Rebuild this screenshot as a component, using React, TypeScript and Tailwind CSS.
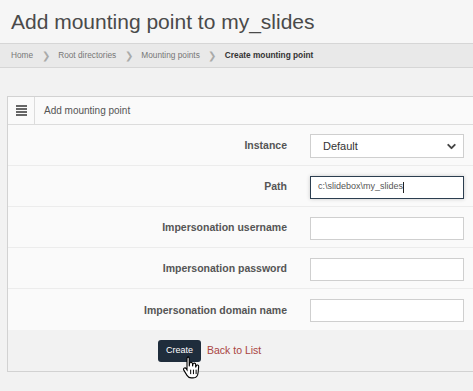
import { ChevronDown } from 'lucide-react'

const rows = [
    { label: 'Instance', kind: 'select' },
    { label: 'Path', kind: 'path' },
    { label: 'Impersonation username', kind: 'text' },
    { label: 'Impersonation password', kind: 'text' },
    { label: 'Impersonation domain name', kind: 'text' },
]

function Crumb({ children, last }: { children: string; last?: boolean }) {
    return (
        <>
            <span className={last ? 'font-bold text-[#333]' : 'text-[#777]'}>{children}</span>
            {!last && <span className="mx-[8.5px] text-[#aaa] text-[10px]">❯</span>}
        </>
    )
}

function HandCursor() {
    return (
        <svg width="20" height="26" viewBox="0 0 18 23" className="absolute left-[174px] top-[25px]">
            <path
                d="M5 1.5c.9 0 1.5.7 1.5 1.6V10l.3-2.4c.1-.8.7-1.3 1.5-1.2.8.1 1.2.7 1.2 1.5V10l.3-1.8c.1-.8.7-1.2 1.4-1.1.8.1 1.2.7 1.1 1.5V11l.4-1.3c.2-.7.8-1 1.4-.9.7.2 1 .8.9 1.5l-.5 5.2c-.2 2.5-1.6 4.9-4.6 4.9H8.2c-1.7 0-2.8-.9-3.7-2.3L1.6 13.4c-.4-.7-.2-1.5.5-1.8.6-.3 1.3-.1 1.7.5l.7 1.1V3.1c0-.9.6-1.6 1.5-1.6z"
                fill="#fff"
                stroke="#000"
                strokeWidth="1"
            />
            <path d="M7.8 13v4M10.3 13v4M12.7 13v4" stroke="#000" strokeWidth="0.9" />
        </svg>
    )
}

export default function App() {
    return (
        <div className="w-[473px] h-[391px] overflow-hidden bg-[#f2f2f2] font-['Liberation_Sans',Arial,sans-serif]">
            {/* Header */}
            <div className="h-[43px] bg-[#f6f6f6] flex items-center pl-[11px]">
                <h1 className="text-[21px] text-[#4a4a4a] leading-none">Add mounting point to my_slides</h1>
            </div>

            {/* Breadcrumb */}
            <div className="h-[25px] bg-[#e9e9e9] border-y border-[#d6d6d6] flex items-center pl-[11px] text-[8.3px]">
                <Crumb>Home</Crumb>
                <Crumb>Root directories</Crumb>
                <Crumb>Mounting points</Crumb>
                <Crumb last>Create mounting point</Crumb>
            </div>

            {/* Panel */}
            <div className="ml-[7px] mt-[28px] w-[480px] border border-[#d2d2d2] bg-[#fafafa]">
                <div className="h-[28px] flex border-b border-[#dcdcdc]">
                    <div className="w-[27px] border-r border-[#dcdcdc] flex flex-col items-center justify-center gap-[1.5px]">
                        <div className="w-[11px] h-[1.5px] bg-[#666]" />
                        <div className="w-[11px] h-[1.5px] bg-[#666]" />
                        <div className="w-[11px] h-[1.5px] bg-[#666]" />
                        <div className="w-[11px] h-[1.5px] bg-[#666]" />
                    </div>
                    <div className="flex items-center pl-[9px] text-[10px] text-[#555]">Add mounting point</div>
                </div>

                {rows.map((row, i) => (
                    <div
                        key={row.label}
                        className={`h-[41px] pt-[2px] flex items-center ${i < rows.length - 1 ? 'border-b border-[#ececec]' : ''}`}
                    >
                        <div className="w-[279px] text-right text-[10.5px] font-bold text-[#555]">{row.label}</div>
                        <div className="ml-[23px] w-[154px]">
                            {row.kind === 'select' && (
                                <div className="h-[24px] bg-white border border-[#cfcfcf] flex items-center justify-between pl-[12px] pr-[5px] text-[11px] text-[#333]">
                                    <span>Default</span>
                                    <ChevronDown size={13} strokeWidth={3.5} className="text-[#444]" />
                                </div>
                            )}
                            {row.kind === 'path' && (
                                <div className="h-[23px] bg-white border border-[#2c3e50] shadow-[0_0_4px_rgba(0,0,0,0.2)] flex items-center pl-[7px] text-[9px] text-[#555]">
                                    c:\slidebox\my_slides<span className="w-px h-[11px] bg-[#222]" />
                                </div>
                            )}
                            {row.kind === 'text' && <div className="h-[23px] bg-white border border-[#cfcfcf]" />}
                        </div>
                    </div>
                ))}

                {/* Footer */}
                <div className="relative h-[41px] bg-[#f2f2f2] flex items-center pl-[150px]">
                    <button className="h-[22px] px-[8px] rounded-[3px] bg-[#1f2d3c] text-white text-[9px]">Create</button>
                    <a className="ml-[6px] text-[10.5px] text-[#a94442]">Back to List</a>
                    <HandCursor />
                </div>
            </div>
        </div>
    )
}
